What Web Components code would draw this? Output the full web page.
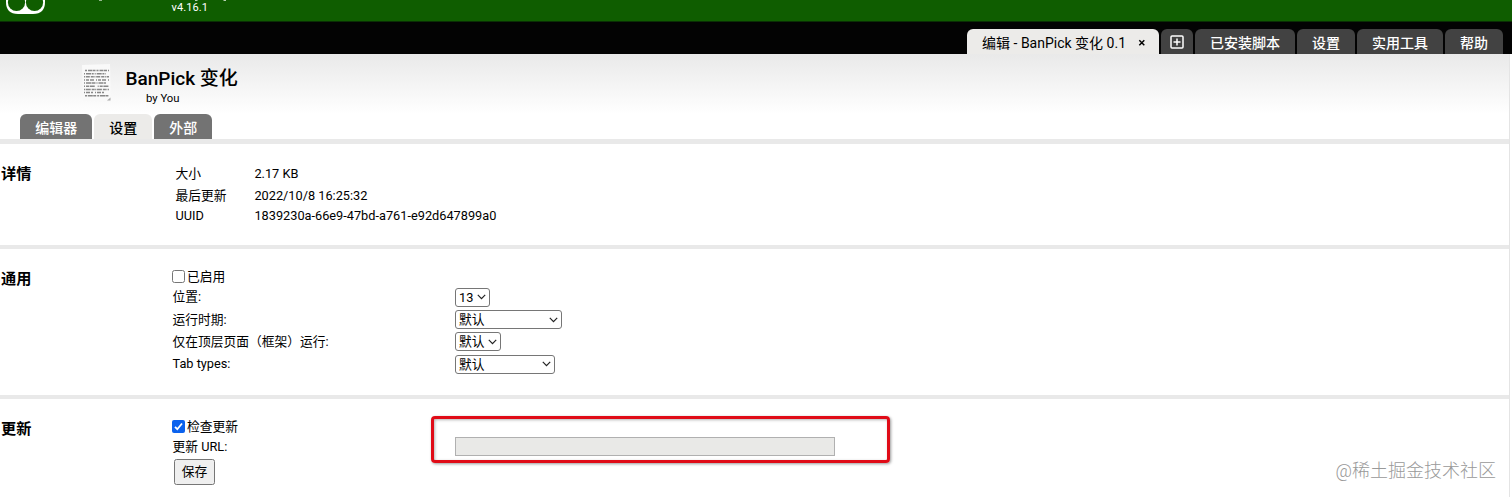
<!DOCTYPE html>
<html lang="zh-CN">
<head>
<meta charset="utf-8">
<title>BanPick 变化</title>
<style>
  body {
    margin: 0;
    height: 497px;
    overflow: hidden;
    position: relative;
    background: #fff;
    color: #000;
    font-family: Roboto, "Noto Sans CJK SC", sans-serif;
    font-size: 12.75px;
  }
</style>
</head>
<body>
<tm-header version="v4.16.1"></tm-header>
<tm-tabbar>
  <tm-tab active closable>编辑 - BanPick 变化 0.1</tm-tab>
  <tm-tab class="new" style="--pad: 0 9px 2px"><svg width="14" height="14" viewBox="0 0 14 14" fill="none" stroke="#fff" stroke-width="1.5"><rect x="1" y="1" width="12" height="12" rx="1"/><path d="M7 3.5v7M3.5 7h7"/></svg></tm-tab>
  <tm-tab>已安装脚本</tm-tab>
  <tm-tab>设置</tm-tab>
  <tm-tab>实用工具</tm-tab>
  <tm-tab>帮助</tm-tab>
</tm-tabbar>
<tm-panel>
  <tm-script-head name="BanPick 变化" author="by You">
    <tm-tab sub>编辑器</tm-tab>
    <tm-tab sub active>设置</tm-tab>
    <tm-tab sub>外部</tm-tab>
  </tm-script-head>
  <tm-section heading="详情" style="height: 101px; --bar: 5px; --top: 19px">
    <tm-info label="大小" style="height: 22px">2.17 KB</tm-info>
    <tm-info label="最后更新" style="height: 21px">2022/10/8 16:25:32</tm-info>
    <tm-info label="UUID" style="height: 20px">1839230a-66e9-47bd-a761-e92d647899a0</tm-info>
  </tm-section>
  <tm-section heading="通用" style="height: 146px; --top: 17px">
    <tm-check>已启用</tm-check>
    <tm-select label="位置:" value="13" style="--w: 35px"></tm-select>
    <tm-select label="运行时期:" value="默认" style="--w: 107px"></tm-select>
    <tm-select label="仅在顶层页面（框架）运行:" value="默认" style="--w: 46px"></tm-select>
    <tm-select label="Tab types:" value="默认" style="--w: 100px"></tm-select>
  </tm-section>
  <tm-section heading="更新" style="height: 98px; --top: 17px">
    <tm-check checked>检查更新</tm-check>
    <tm-url label="更新 URL:"></tm-url>
    <tm-button>保存</tm-button>
  </tm-section>
</tm-panel>
<tm-highlight></tm-highlight>
<tm-watermark>@稀土掘金技术社区</tm-watermark>

<script>
class TmElement extends HTMLElement {
  connectedCallback() {
    this.attachShadow({ mode: 'open' }).innerHTML = this.render()
  }

  attr(name) {
    return this.getAttribute(name) || ''
  }
}

customElements.define('tm-header', class extends TmElement {
  render() {
    return `
    <style>
      :host { display: flex; height: 22px; background: #0f5d00; border-bottom: 1px solid #0a2f04; box-sizing: border-box; overflow: hidden; color: #fff; }
      svg { display: block; width: 240px; flex: none; margin-right: -68.5px; }
      .version { font-size: 11px; line-height: 13px; letter-spacing: .1px; margin-top: 1px; }
    </style>
    <svg height="21" viewBox="0 0 240 21">
      <path d="M6 -4V2Q6 14 18 14H33Q45 14 45 2V-4Z" fill="#fff"/>
      <circle cx="16.5" cy="2.5" r="8.6" fill="#0f5d00"/>
      <circle cx="34.5" cy="2.5" r="8.6" fill="#0f5d00"/>
      <path d="M99 0.3h3M195 0.5h2.5M223.5 0.5h2.5" stroke="#b6d0b2" stroke-width="1"/>
    </svg>
    <span class="version">${this.attr('version')}</span>`
  }
})

customElements.define('tm-tabbar', class extends TmElement {
  render() {
    return `
    <style>
      :host { display: flex; justify-content: flex-end; align-items: flex-end; gap: 2px; height: 32px; padding-right: 9px; background: #030303; }
    </style>
    <slot></slot>`
  }
})

customElements.define('tm-tab', class extends TmElement {
  render() {
    return `
    <style>
      :host { display: flex; align-items: center; box-sizing: border-box; height: 25px; padding: var(--pad, 0 15px); border-radius: 6px 6px 0 0; background: #424242; color: #fff; font-size: 14px; font-weight: 500; line-height: 24px; white-space: nowrap; }
      :host([sub]) { background: #737373; }
      :host([active]) { background: #ecebe9; color: #000; font-weight: 400; }
      :host([sub][active]) { font-weight: 500; }
      :host([closable]) { padding-right: 13px; }
      .label { display: flex; padding-top: 2px; }
      .close { margin-left: 12px; }
    </style>
    <span class="label"><slot></slot></span>
    ${this.hasAttribute('closable') ? '<svg class="close" width="8" height="8" viewBox="0 0 8 8" stroke="#000" stroke-width="1.5"><path d="M1.3 2.3l5 5M6.3 2.3l-5 5"/></svg>' : ''}`
  }
})

customElements.define('tm-panel', class extends TmElement {
  render() {
    return `
    <style>
      :host { display: block; height: 443px; width: 1510px; box-sizing: border-box; border-right: 1px solid #e4e4e4; background: linear-gradient(#e9e9e9, #fff 60px); }
    </style>
    <slot></slot>`
  }
})

customElements.define('tm-script-head', class extends TmElement {
  render() {
    let lines = ''
    const dashes = ['2 1 4 .5 3 1', '1 1 5 .7 2 1', '1 .8 4 1 3 .6', '1 1 3 1 4 2', '1 1 5 .5 4 1', '1 1 3 .7 5 3', '1 .7 5 1 3 .5', '1 1 4 1 2 2', '2 .8 5 .4 3 1']
    dashes.forEach((d, i) => {
      lines += `<path d="M${i === 0 || i === 8 ? 3 : 2} ${6.5 + i * 3.15}H${i % 3 === 1 ? 24 : 27}" stroke-dasharray="${d}"/>`
    })
    return `
    <style>
      :host { display: flex; flex-direction: column; height: 85px; }
      .top { display: flex; height: 60px; padding-left: 82px; }
      svg { margin-top: 10px; }
      .text { margin-left: 13.5px; padding-top: 12px; }
      h1 { margin: 0; font-size: 19px; line-height: 26px; font-weight: 500; white-space: nowrap; }
      .author { margin-left: 20.5px; font-size: 11.3px; line-height: 14px; }
      .tabs { display: flex; gap: 2px; padding-left: 20.3px; }
    </style>
    <div class="top">
      <svg width="30" height="38" viewBox="0 0 30 38">
        <path d="M0 1L28 0L29 38L1 37Z" fill="#f9f9f9"/>
        <g stroke="#888" stroke-width="1.5" fill="none">${lines}</g>
        <path d="M25 36.5L28.5 33.5V36.5Z" fill="#aaa"/>
      </svg>
      <div class="text">
        <h1>${this.attr('name')}</h1>
        <div class="author">${this.attr('author')}</div>
      </div>
    </div>
    <div class="tabs"><slot></slot></div>`
  }
})

customElements.define('tm-section', class extends TmElement {
  render() {
    return `
    <style>
      :host { display: grid; grid-template-columns: 172px 1fr; box-sizing: content-box; border-top: var(--bar, 4px) solid #e9e9e9; background: #fff; }
      h2 { margin: 19px 0 0 1px; font-size: 15.2px; line-height: 22px; font-weight: 700; }
      .rows { padding-top: var(--top); }
    </style>
    <h2>${this.attr('heading')}</h2>
    <div class="rows"><slot></slot></div>`
  }
})

customElements.define('tm-info', class extends TmElement {
  render() {
    return `
    <style>
      :host { display: flex; align-items: center; padding-left: 3.4px; line-height: 20px; }
      .label { width: 79px; }
    </style>
    <span class="label">${this.attr('label')}</span><slot></slot>`
  }
})

customElements.define('tm-check', class extends TmElement {
  render() {
    const box = this.hasAttribute('checked')
      ? '<rect width="13" height="13" rx="2" fill="#0b62ee"/><path d="M3 6.8L5.3 9.2L10 3.5" fill="none" stroke="#fff" stroke-width="1.8"/>'
      : '<rect x=".5" y=".5" width="12" height="12" rx="2" fill="#fff" stroke="#767676"/>'
    return `
    <style>
      :host { display: flex; align-items: center; gap: 2px; height: 20px; line-height: 21px; }
      svg { margin-top: 1px; }
    </style>
    <svg width="13" height="13" viewBox="0 0 13 13">${box}</svg>
    <slot></slot>`
  }
})

customElements.define('tm-select', class extends TmElement {
  render() {
    return `
    <style>
      :host { display: flex; align-items: center; height: 22.4px; line-height: 20px; }
      .label { width: 283px; padding-left: .5px; box-sizing: border-box; }
      .box { display: flex; align-items: center; justify-content: space-between; box-sizing: border-box; width: var(--w); height: 19px; padding: 0 3px; border: 1px solid #767676; border-radius: 3px; background: #fff; }
      .box span { line-height: 17px; }
    </style>
    <span class="label">${this.attr('label')}</span>
    <div class="box">
      <span>${this.attr('value')}</span>
      <svg width="9" height="6" viewBox="0 0 9 6" fill="none" stroke="#222" stroke-width="1.2"><path d="M.8 .8L4.5 4.6L8.2 .8"/></svg>
    </div>`
  }
})

customElements.define('tm-url', class extends TmElement {
  render() {
    return `
    <style>
      :host { display: flex; align-items: center; height: 21px; line-height: 21px; }
      .label { width: 283px; padding-left: .5px; box-sizing: border-box; }
      .field { box-sizing: border-box; width: 380px; height: 19px; border: 1px solid #b0b0b0; background: #e9e9e7; }
    </style>
    <span class="label">${this.attr('label')}</span>
    <div class="field"></div>`
  }
})

customElements.define('tm-button', class extends TmElement {
  render() {
    return `
    <style>
      :host { display: flex; align-items: center; justify-content: center; box-sizing: border-box; width: 41px; height: 26px; margin: 2px 0 0 2px; border: 1px solid #767676; border-radius: 2.5px; background: #efefef; line-height: 20px; }
    </style>
    <slot></slot>`
  }
})

// red frame laid over the update URL field
customElements.define('tm-highlight', class extends TmElement {
  render() {
    return `
    <style>
      :host { position: absolute; left: 431px; top: 416px; width: 459px; height: 47px; box-sizing: border-box; border: 3px solid #e00b17; border-radius: 4px; box-shadow: 1px 1px 3px rgba(0, 0, 0, .4), inset 1px 1px 3px rgba(0, 0, 0, .3); }
    </style>`
  }
})

customElements.define('tm-watermark', class extends TmElement {
  render() {
    return `
    <style>
      :host { position: absolute; right: 16px; top: 459px; color: #999; font-size: 18px; font-weight: 300; line-height: 24px; white-space: nowrap; }
    </style>
    <slot></slot>`
  }
})
</script>
</body>
</html>
